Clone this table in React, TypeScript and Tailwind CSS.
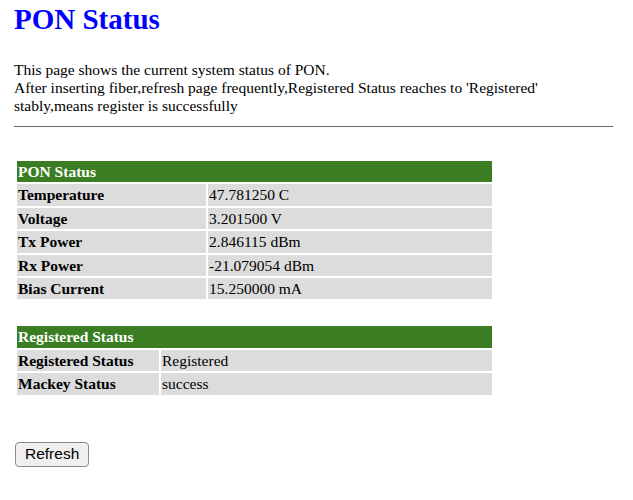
import React from "react";

const ponRows: [string, string][] = [
  ["Temperature", "47.781250 C"],
  ["Voltage", "3.201500 V"],
  ["Tx Power", "2.846115 dBm"],
  ["Rx Power", "-21.079054 dBm"],
  ["Bias Current", "15.250000 mA"],
];

const regRows: [string, string][] = [
  ["Registered Status", "Registered"],
  ["Mackey Status", "success"],
];

function StatusTable({
  title,
  rows,
  labelWidth,
  className,
}: {
  title: string;
  rows: [string, string][];
  labelWidth: string;
  className?: string;
}) {
  return (
    <table
      className={
        "w-[479px] border-separate border-spacing-[2px] text-[15.5px] leading-none " +
        (className ?? "")
      }
    >
      <tbody>
        <tr>
          <td
            colSpan={2}
            className="h-[21.4px] bg-[#3a7d22] px-px font-bold text-white"
          >
            {title}
          </td>
        </tr>
        {rows.map(([label, value]) => (
          <tr key={label}>
            <td
              className={"h-[21.4px] bg-[#dcdcdc] px-px font-bold " + labelWidth}
            >
              {label}
            </td>
            <td className="h-[21.4px] bg-[#dcdcdc] px-px">{value}</td>
          </tr>
        ))}
      </tbody>
    </table>
  );
}

export default function App() {
  return (
    <div
      className="min-h-[500px] bg-white px-[14px] pt-[3px] text-black"
      style={{ fontFamily: '"Liberation Serif", "Times New Roman", serif' }}
    >
      <h1 className="text-[29px] font-bold leading-[32px] text-[#0000ff]">
        PON Status
      </h1>

      <p className="mt-[26px] text-[15.5px] leading-[18px]">
        This page shows the current system status of PON.
        <br />
        After inserting fiber,refresh page frequently,Registered Status reaches
        to 'Registered' stably,means register is successfully
      </p>

      <div className="mt-[11px] h-px w-[599px] bg-[#666666]" />

      <StatusTable
        title="PON Status"
        rows={ponRows}
        labelWidth="w-[189px]"
        className="mt-[32px] ml-px"
      />

      <StatusTable
        title="Registered Status"
        rows={regRows}
        labelWidth="w-[142px]"
        className="mt-[23px] ml-px"
      />

      <button
        type="button"
        className="mt-[45px] ml-px h-[25px] rounded-[4px] border border-[#8a8a8a] bg-[#efefef] px-[9px] text-[15.5px] leading-none text-black"
        style={{ fontFamily: '"Liberation Sans", Arial, sans-serif' }}
      >
        Refresh
      </button>
    </div>
  );
}
